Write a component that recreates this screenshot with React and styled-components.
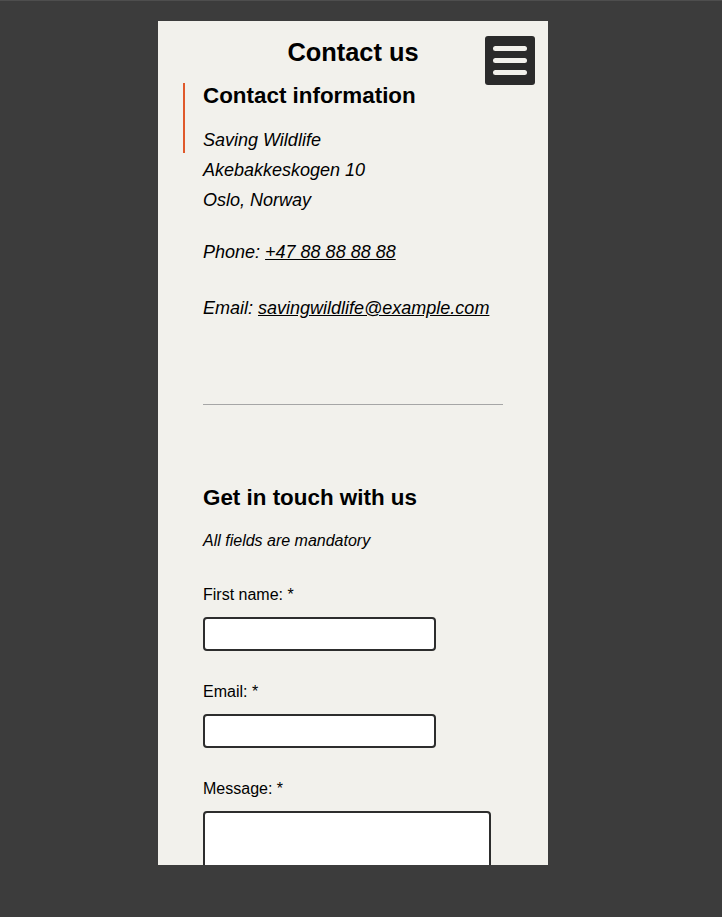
import React from "react";
import styled, { createGlobalStyle } from "styled-components";

const GlobalStyle = createGlobalStyle`
  body {
    margin: 0;
    background: #3c3c3c;
    font-family: "Liberation Sans", Arial, sans-serif;
    color: #000;
  }
`;

// Dark backdrop around the phone-sized page
const Screen = styled.div`
  min-height: 100vh;
  box-sizing: border-box;
  border-top: 1px solid #4e4e4e;
  padding: 20px 0 0 158px;
`;

const Page = styled.div`
  position: relative;
  width: 390px;
  height: 844px;
  overflow: hidden;
  background: #f2f1ec;
`;

const Header = styled.header`
  padding-top: 16px;
`;

const Title = styled.h1`
  margin: 0;
  font-size: 25.4px;
  line-height: 30px;
  font-weight: bold;
  text-align: center;
`;

const MenuButton = styled.button`
  position: absolute;
  top: 15px;
  right: 13px;
  width: 50px;
  height: 49px;
  padding: 0;
  border: none;
  border-radius: 3px;
  background: #2b2b2b;
  display: flex;
  flex-direction: column;
  align-items: center;
  justify-content: center;
  gap: 7px;
  cursor: pointer;
`;

const Bar = styled.span`
  display: block;
  width: 34px;
  height: 5px;
  border-radius: 3px;
  background: #f2f1ec;
`;

const Main = styled.main`
  padding: 0 45px;
`;

const InfoSection = styled.section`
  position: relative;
  margin-top: 16px;

  &::before {
    content: "";
    position: absolute;
    left: -20px;
    top: 0;
    width: 2px;
    height: 70px;
    background: #e0592b;
  }
`;

const SectionTitle = styled.h2`
  margin: ${(p) => p.$top || 0}px 0 0;
  font-size: 22.4px;
  line-height: 26px;
  font-weight: bold;
`;

const Address = styled.address`
  margin-top: 16px;
  font-style: italic;
  font-size: 18px;
  line-height: 30px;
`;

const ContactLine = styled.p`
  margin: ${(p) => p.$top}px 0 0;
  font-style: italic;
  font-size: 18px;
  line-height: 30px;
`;

const Link = styled.a`
  color: #000;
  text-decoration: underline;
`;

const Divider = styled.hr`
  margin: 81px 0 0;
  width: 300px;
  height: 1px;
  border: none;
  background: #a6a6a6;
`;

const Note = styled.p`
  margin: 20px 0 0;
  font-style: italic;
  font-size: 16px;
  line-height: 20px;
`;

const Form = styled.form`
  margin-top: 34px;
  display: flex;
  flex-direction: column;
  gap: 31px;
`;

const Field = styled.div`
  display: flex;
  flex-direction: column;
  align-items: flex-start;
`;

const Label = styled.label`
  font-size: 16px;
  line-height: 20px;
  margin-bottom: 12px;
`;

const Input = styled.input`
  box-sizing: border-box;
  width: 233px;
  height: 34px;
  border: 2px solid #2d2d2d;
  border-radius: 4px;
  background: #fff;
  font: inherit;
`;

const TextArea = styled.textarea`
  box-sizing: border-box;
  width: 288px;
  height: 110px;
  border: 2px solid #2d2d2d;
  border-radius: 4px;
  background: #fff;
  font: inherit;
  resize: none;
`;

export default function App() {
  return (
    <>
      <GlobalStyle />
      <Screen>
        <Page>
          <Header>
            <Title>Contact us</Title>
            <MenuButton aria-label="Menu">
              <Bar />
              <Bar />
              <Bar />
            </MenuButton>
          </Header>
          <Main>
            <InfoSection>
              <SectionTitle>Contact information</SectionTitle>
              <Address>
                Saving Wildlife
                <br />
                Akebakkeskogen 10
                <br />
                Oslo, Norway
              </Address>
              <ContactLine $top={22}>
                Phone: <Link href="#">+47 88 88 88 88</Link>
              </ContactLine>
              <ContactLine $top={26}>
                Email: <Link href="#">savingwildlife@example.com</Link>
              </ContactLine>
            </InfoSection>
            <Divider />
            <section>
              <SectionTitle $top={80}>Get in touch with us</SectionTitle>
              <Note>All fields are mandatory</Note>
              <Form>
                <Field>
                  <Label htmlFor="firstname">First name: *</Label>
                  <Input id="firstname" type="text" />
                </Field>
                <Field>
                  <Label htmlFor="email">Email: *</Label>
                  <Input id="email" type="email" />
                </Field>
                <Field>
                  <Label htmlFor="message">Message: *</Label>
                  <TextArea id="message" />
                </Field>
              </Form>
            </section>
          </Main>
        </Page>
      </Screen>
    </>
  );
}
